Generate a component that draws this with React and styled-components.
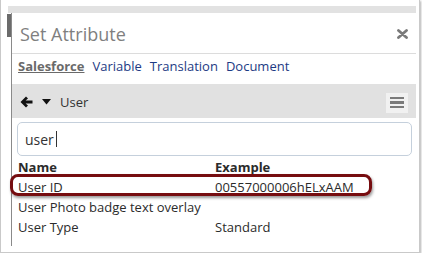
import React from 'react';
import styled, { createGlobalStyle } from 'styled-components';

const GlobalStyle = createGlobalStyle`
  html, body {
    margin: 0;
    padding: 0;
    background: #ffffff;
  }
  body {
    font-family: "Open Sans", "Liberation Sans", sans-serif;
  }
`;

const tabs = [
  { label: 'Salesforce', active: true },
  { label: 'Variable' },
  { label: 'Translation' },
  { label: 'Document' },
];

const rows = [
  { name: 'User ID', example: '00557000006hELxAAM', marked: true },
  { name: 'User Photo badge text overlay', example: '' },
  { name: 'User Type', example: 'Standard' },
];

const App = () => {
  return (
    <>
      <GlobalStyle />
      <Frame>
        <TopBand />
        <Body>
          <Rail>
            <Grip />
          </Rail>
          <Dialog>
            <TitleRow>
              <Title>Set Attribute</Title>
              <Close>
                <svg width='11' height='10' viewBox='0 0 11 10'>
                  <path d='M1.5 1.5 L9.5 8.5 M9.5 1.5 L1.5 8.5' stroke='#7a7a7a' strokeWidth='2.8' strokeLinecap='round' />
                </svg>
              </Close>
            </TitleRow>
            <Tabs>
              {tabs.map((t) => (
                <Tab key={t.label} $active={t.active}>
                  {t.label}
                </Tab>
              ))}
            </Tabs>
            <PathBar>
              <Crumbs>
                <svg width='13' height='12' viewBox='0 0 13 12'>
                  <path d='M6 0.5 L8 2.5 L5.6 4.6 H12.5 V7.4 H5.6 L8 9.5 L6 11.5 L0.5 6 Z' fill='#111' />
                </svg>
                <svg width='9' height='6' viewBox='0 0 9 6'>
                  <path d='M0 0 H9 L4.5 5.5 Z' fill='#111' />
                </svg>
                <Crumb>User</Crumb>
              </Crumbs>
              <MenuButton>
                <Bar />
                <Bar />
                <Bar />
              </MenuButton>
            </PathBar>
            <Search>
              user
              <Caret />
            </Search>
            <Table>
              <HeadRow>
                <Cell>Name</Cell>
                <Cell>Example</Cell>
              </HeadRow>
              {rows.map((r) => (
                <Row key={r.name}>
                  <Cell>{r.name}</Cell>
                  <Cell>{r.example}</Cell>
                  {r.marked && <Highlight />}
                </Row>
              ))}
            </Table>
          </Dialog>
        </Body>
      </Frame>
    </>
  );
};

export default App;

const Frame = styled.div`
  box-sizing: border-box;
  width: 420px;
  height: 253px;
  padding-top: 6px;
  border: 1px solid #c9c9c9;
  border-top: none;
  box-shadow: 1px 1px 2px rgba(0, 0, 0, 0.3);
  display: flex;
  flex-direction: column;
  overflow: hidden;
`;

const TopBand = styled.div`
  height: 7px;
  margin: 0 3px 0 7px;
  background: #e2e2e2;
`;

const Body = styled.div`
  flex: 1;
  display: flex;
  padding-bottom: 6px;
`;

const Rail = styled.div`
  width: 4px;
  margin-left: 6px;
  padding-top: 1px;
`;

const Grip = styled.div`
  height: 23px;
  background: #6b6b6b;
`;

const Dialog = styled.div`
  flex: 1;
  margin-right: 3px;
  border-left: 1px solid #8a8a8a;
  display: flex;
  flex-direction: column;
`;

const TitleRow = styled.div`
  height: 40px;
  border-bottom: 1px solid #dcdcdc;
  display: flex;
  align-items: center;
  justify-content: space-between;
  padding: 0 8px 0 8px;
`;

const Title = styled.div`
  font-size: 18px;
  color: #7f7f7f;
  margin-top: 1px;
`;

const Close = styled.div`
  display: flex;
  margin-top: 1px;
`;

const Tabs = styled.div`
  height: 30px;
  box-sizing: border-box;
  padding: 3px 0 0 6px;
  display: flex;
  gap: 8px;
  font-size: 13px;
  line-height: 18px;
`;

const Tab = styled.span`
  color: ${(p) => (p.$active ? '#6a6a6a' : '#1d3b84')};
  font-weight: ${(p) => (p.$active ? 700 : 400)};
  text-decoration: ${(p) => (p.$active ? 'underline' : 'none')};
`;

const PathBar = styled.div`
  height: 34px;
  background: #e1e1e1;
  display: flex;
  align-items: center;
  justify-content: space-between;
  padding: 0 8px 0 8px;
`;

const Crumbs = styled.div`
  display: flex;
  align-items: center;
  gap: 9px;
  margin-top: 1px;
`;

const Crumb = styled.span`
  font-size: 13px;
  color: #333;
`;

const MenuButton = styled.div`
  width: 22px;
  height: 20px;
  background: #f1f1f1;
  display: flex;
  flex-direction: column;
  align-items: center;
  justify-content: center;
  gap: 2px;
  margin-top: 3px;
`;

const Bar = styled.div`
  width: 14px;
  height: 2.5px;
  background: #7a7a7a;
`;

const Search = styled.div`
  box-sizing: border-box;
  height: 34px;
  margin: 4px 4px 1px 5px;
  border: 1px solid #c5d0dc;
  border-radius: 5px;
  padding-left: 7px;
  display: flex;
  align-items: center;
  font-size: 14px;
  color: #333;
`;

const Caret = styled.span`
  width: 1px;
  height: 16px;
  background: #333;
  margin-left: 2px;
`;

const Table = styled.div`
  display: flex;
  flex-direction: column;
  font-size: 13px;
  color: #2b2b2b;
`;

const Row = styled.div`
  position: relative;
  height: 20px;
  display: grid;
  grid-template-columns: 197px 1fr;
  align-items: center;
  padding-left: 6px;
`;

const HeadRow = styled(Row)`
  font-weight: 700;
`;

const Cell = styled.div`
  white-space: nowrap;
`;

const Highlight = styled.span`
  position: absolute;
  left: -2px;
  top: -3px;
  width: 362px;
  height: 22px;
  box-sizing: border-box;
  border: 3px solid #760d10;
  border-radius: 8px;
  box-shadow: 1px 2px 3px rgba(0, 0, 0, 0.4);
  pointer-events: none;
`;
